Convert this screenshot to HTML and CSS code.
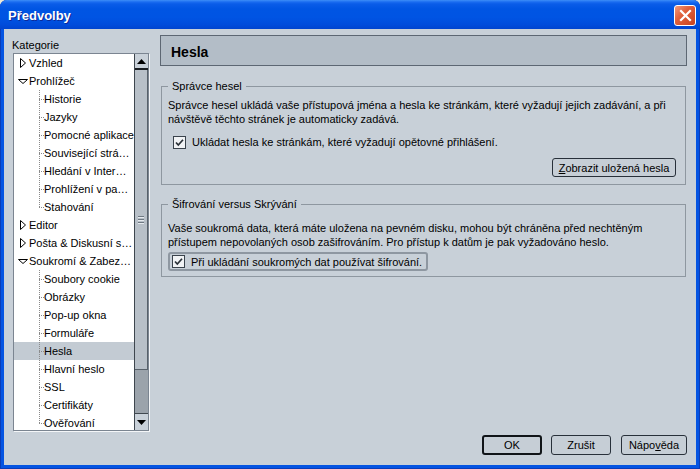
FILE: index.html
```html
<!DOCTYPE html>
<html lang="cs">
<head>
<meta charset="utf-8">
<title>Předvolby</title>
<link rel="stylesheet" href="styles.css">
</head>
<body>
<div class="window">
  <div class="titlebar">
    <span class="title">Předvolby</span>
    <div class="close">
      <svg width="13" height="13" viewBox="0 0 13 13"><path d="M2 2 L11 11 M11 2 L2 11" stroke="#fff" stroke-width="2.2" stroke-linecap="square"/></svg>
    </div>
  </div>
  <div class="client">
    <div class="main">
      <div class="sidebar">
        <div class="cat-label">Kategorie</div>
        <div class="tree">
          <div class="rows">
            <div class="row top"><svg class="twisty" width="12" height="18" viewBox="0 0 12 18"><path d="M4.5 4.5 L9.5 9 L4.5 13.5 Z" fill="#fff" stroke="#000"/></svg><span>Vzhled</span></div>
            <div class="row top"><svg class="twisty" width="12" height="18" viewBox="0 0 12 18"><path d="M2.5 7.5 L11.5 7.5 L7 11.5 Z" fill="#fff" stroke="#000"/></svg><span>Prohlížeč</span></div>
            <div class="row child">Historie</div>
            <div class="row child">Jazyky</div>
            <div class="row child">Pomocné aplikace</div>
            <div class="row child">Související strá…</div>
            <div class="row child">Hledání v Inter…</div>
            <div class="row child">Prohlížení v pa…</div>
            <div class="row child last">Stahování</div>
            <div class="row top"><svg class="twisty" width="12" height="18" viewBox="0 0 12 18"><path d="M4.5 4.5 L9.5 9 L4.5 13.5 Z" fill="#fff" stroke="#000"/></svg><span>Editor</span></div>
            <div class="row top"><svg class="twisty" width="12" height="18" viewBox="0 0 12 18"><path d="M4.5 4.5 L9.5 9 L4.5 13.5 Z" fill="#fff" stroke="#000"/></svg><span>Pošta &amp; Diskusní s…</span></div>
            <div class="row top"><svg class="twisty" width="12" height="18" viewBox="0 0 12 18"><path d="M2.5 7.5 L11.5 7.5 L7 11.5 Z" fill="#fff" stroke="#000"/></svg><span>Soukromí &amp; Zabez…</span></div>
            <div class="row child">Soubory cookie</div>
            <div class="row child">Obrázky</div>
            <div class="row child">Pop-up okna</div>
            <div class="row child">Formuláře</div>
            <div class="row child selected">Hesla</div>
            <div class="row child">Hlavní heslo</div>
            <div class="row child">SSL</div>
            <div class="row child">Certifikáty</div>
            <div class="row child last">Ověřování</div>
          </div>
          <div class="scrollbar">
            <div class="sb-btn up"><svg width="9" height="5" viewBox="0 0 9 5"><path d="M0 5 L4.5 0 L9 5 Z" fill="#000"/></svg></div>
            <div class="sb-thumb"><span class="grip"></span><span class="grip"></span><span class="grip"></span></div>
            <div class="sb-track"></div>
            <div class="sb-btn down"><svg width="9" height="5" viewBox="0 0 9 5"><path d="M0 0 L9 0 L4.5 5 Z" fill="#000"/></svg></div>
          </div>
        </div>
      </div>
      <div class="panel">
        <div class="header">Hesla</div>
        <fieldset class="group g1">
          <legend>Správce hesel</legend>
          <p>Správce hesel ukládá vaše přístupová jména a hesla ke stránkám, které vyžadují jejich zadávání, a při návštěvě těchto stránek je automaticky zadává.</p>
          <div class="check-row">
            <svg class="cb" width="13" height="13" viewBox="0 0 13 13"><rect x="0.5" y="0.5" width="12" height="12" fill="#f1f3f5" stroke="#3a434c"/><path d="M3 6.5 L5.3 9 L10 3.8" fill="none" stroke="#2a3138" stroke-width="1.7"/></svg>
            <span>Ukládat hesla ke stránkám, které vyžadují opětovné přihlášení.</span>
          </div>
          <div class="btn-row">
            <div class="btn wide"><span><u>Z</u>obrazit uložená hesla</span></div>
          </div>
        </fieldset>
        <fieldset class="group g2">
          <legend>Šifrování versus Skrývání</legend>
          <p>Vaše soukromá data, která máte uložena na pevném disku, mohou být chráněna před nechtěným přístupem nepovolaných osob zašifrováním. Pro přístup k datům je pak vyžadováno heslo.</p>
          <div class="focus-ring">
            <svg class="cb" width="13" height="13" viewBox="0 0 13 13"><rect x="0.5" y="0.5" width="12" height="12" fill="#f1f3f5" stroke="#3a434c"/><path d="M3 6.5 L5.3 9 L10 3.8" fill="none" stroke="#2a3138" stroke-width="1.7"/></svg>
            <span>Při ukládání soukromých dat používat šifrování.</span>
          </div>
        </fieldset>
      </div>
    </div>
    <div class="buttons">
      <div class="btn default ok">OK</div>
      <div class="btn cancel">Zrušit</div>
      <div class="btn help">Nápo<u>v</u>ěda</div>
    </div>
  </div>
</div>
</body>
</html>
```

FILE: styles.css
```css
* { box-sizing: border-box; }
html, body { margin: 0; padding: 0; }
body {
  width: 700px;
  height: 469px;
  overflow: hidden;
  background: #ece9d8;
  font-family: "Liberation Sans", Arial, sans-serif;
  font-size: 11px;
  color: #000;
}
.window {
  width: 700px;
  height: 469px;
  display: flex;
  flex-direction: column;
  background: #0554e2;
  border-radius: 7px 7px 0 0;
  overflow: hidden;
  box-shadow: inset 1px 0 0 #0a3cb8, inset -1px 0 0 #0a3cb8, inset 0 -1px 0 #0a3cb8;
}
.titlebar {
  flex: none;
  height: 29px;
  padding: 2px 4px 0 8px;
  display: flex;
  align-items: center;
  justify-content: space-between;
  background: linear-gradient(to bottom, #3d8ef7 0, #1a6cf0 2px, #0a5ce8 4px, #0055e3 9px, #0054e3 60%, #004cdb 85%, #0044cf 100%);
}
.title {
  color: #fff;
  font-weight: bold;
  font-size: 13px;
  text-shadow: 1px 1px 0 #0d2a9a;
}
.close {
  width: 22px;
  height: 21px;
  border: 1px solid #fff;
  border-radius: 3px;
  background: linear-gradient(135deg, #f09a7c 0, #e0603c 40%, #c9421f 100%);
  display: flex;
  align-items: center;
  justify-content: center;
}
.client {
  flex: 1;
  margin: 0 4px 4px;
  background: #c8d0d8;
  display: flex;
  flex-direction: column;
  padding: 6px 9px 0 8px;
}
.main {
  display: flex;
  height: 397px;
}
.sidebar {
  width: 138px;
  flex: none;
}
.cat-label {
  margin-top: 3px;
  line-height: 14px;
}
.tree {
  margin: 1px 0 0 1px;
  width: 136px;
  height: 378px;
  border: 1px solid #7b8591;
  box-shadow: 1px 1px 0 #f4f6f8;
  background: #fff;
  display: flex;
  overflow: hidden;
}
.rows {
  width: 120px;
  flex: none;
  overflow: hidden;
}
.row {
  height: 18px;
  line-height: 18px;
  white-space: nowrap;
  overflow: hidden;
}
.row.top {
  display: flex;
  padding-left: 2px;
}
.row.top span {
  margin-left: 1px;
}
.twisty {
  flex: none;
}
.row.child {
  padding-left: 30px;
  background:
    repeating-linear-gradient(to bottom, #8a8a8a 0 1px, transparent 1px 2px) 25px 0 / 1px 100% no-repeat,
    repeating-linear-gradient(to right, #8a8a8a 0 1px, transparent 1px 2px) 25px 9px / 5px 1px no-repeat;
}
.row.child.last {
  background:
    repeating-linear-gradient(to bottom, #8a8a8a 0 1px, transparent 1px 2px) 25px 0 / 1px 10px no-repeat,
    repeating-linear-gradient(to right, #8a8a8a 0 1px, transparent 1px 2px) 25px 9px / 5px 1px no-repeat;
}
.row.child.selected {
  background-color: #c3cbd3;
}
.scrollbar {
  width: 14px;
  flex: none;
  display: flex;
  flex-direction: column;
  border-left: 1px solid #3e464e;
}
.sb-btn {
  flex: none;
  display: flex;
  align-items: center;
  justify-content: center;
  background: #c9d1d9;
}
.sb-btn.up {
  height: 16px;
  border-bottom: 2px solid #1a1e22;
}
.sb-btn.down {
  height: 17px;
  border-top: 1px solid #40484f;
}
.sb-thumb {
  flex: none;
  height: 300px;
  background: #b8c0c8;
  border-right: 1px solid #58616a;
  border-bottom: 1px solid #58616a;
  display: flex;
  flex-direction: column;
  align-items: center;
  justify-content: center;
  gap: 2px;
}
.grip {
  width: 6px;
  height: 1px;
  background: #6e7882;
  box-shadow: 0 1px 0 #e6eaee;
}
.sb-track {
  flex: 1;
  background: #9ba3ab;
}
.panel {
  width: 527px;
  flex: none;
  margin-left: 10px;
  display: flex;
  flex-direction: column;
}
.header {
  height: 31px;
  flex: none;
  border: 1px solid #5d6773;
  background: #b3bdc7;
  font-weight: bold;
  font-size: 14px;
  padding: 3px 0 0 10px;
  display: flex;
  align-items: center;
}
.group {
  margin: 13px 1px 0;
  border: 1px solid #8e97a0;
  min-width: 0;
}
.group legend {
  padding: 0 4px;
  line-height: 14px;
}
.group p {
  margin: 0;
  line-height: 14px;
}
.g1 {
  padding: 5px 6px 7px 6px;
}
.g2 {
  margin-top: 12px;
  padding: 10px 6px 5px 6px;
}
.check-row {
  margin-top: 9px;
  height: 14px;
  padding-left: 5px;
  display: flex;
  align-items: center;
}
.cb {
  flex: none;
  margin-right: 6px;
}
.btn-row {
  margin-top: 9px;
  display: flex;
  justify-content: flex-end;
  padding-right: 3px;
}
.btn {
  height: 19px;
  border: 1px solid #28303a;
  border-radius: 3px;
  background: #c6ced6;
  display: flex;
  align-items: center;
  justify-content: center;
  white-space: nowrap;
}
.btn.wide {
  width: 124px;
}
.focus-ring {
  margin-top: 3px;
  align-self: flex-start;
  height: 19px;
  border: 2px solid #8e97a1;
  border-radius: 3px;
  padding: 0 4px 0 2px;
  display: inline-flex;
  align-items: center;
}
.buttons {
  margin-top: 3px;
  display: flex;
  justify-content: flex-end;
}
.buttons .btn {
  height: 20px;
}
.btn.default {
  border: 2px solid #101418;
}
.btn.ok {
  width: 60px;
}
.btn.cancel {
  width: 60px;
  margin-left: 9px;
}
.btn.help {
  width: 66px;
  margin-left: 10px;
}
```
